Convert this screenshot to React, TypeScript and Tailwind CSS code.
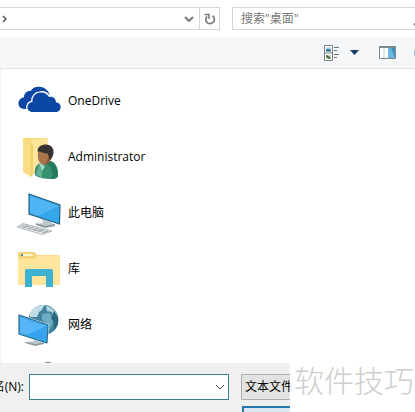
import type { ReactNode } from "react";

function OneDriveIcon() {
  return (
    <svg viewBox="0 0 44 44" className="size-11 shrink-0" aria-hidden="true">
      <path
        d="M6 30C2 29.500 0 27 0.500 23.500C1 20.500 3 18.500 6 18.500C6 14 9 11.500 12.500 12C15 8 19 7 23 8C27 8.500 30 11.500 31.500 15L28 30Z"
        fill="#0d47a5"
      />
      <path
        d="M15 33C11 33 9 30.500 9.500 27.500C10 24.500 12 23 14.500 23C14 18 17 14 22 13.500C26 13 29.500 15 31 18C35 17 38 19.500 38 23.500C41.500 23.500 43 26 42.500 29C42 31.500 40.500 33 38 33Z"
        fill="#0d47a5"
        stroke="#fff"
        strokeWidth="2.600"
        paintOrder="stroke"
      />
    </svg>
  );
}

function UserFolderIcon() {
  return (
    <svg viewBox="0 0 44 44" className="size-11 shrink-0" aria-hidden="true">
      <path d="M5 3H29.500V38H9L5 34Z" fill="#f8d878" />
      <path d="M12 5L29.500 3V37L12 39Z" fill="#ffe59a" />
      <path d="M5 3L13 8V42L5 37Z" fill="#f9dc85" />
      <path d="M13 8V42L15 40V9Z" fill="#f3cf6c" />
      <path
        d="M17 40C16 34 18 30 22 28L32 26C37 27 40 32 40 40C40 43 37 44 33 44C27 44 20 43 17 40Z"
        fill="#37906f"
      />
      <path d="M32 26C37 27 40 32 40 40C40 43 37 44 33 44C36 39 34 33 29 29Z" fill="#277a5c" />
      <path d="M21 28.500L23 27L27 32L24 36Z" fill="#9fd6c2" />
      <path d="M24 36L24 43L18 40L21 30Z" fill="#64b093" />
      <path d="M20 17C19 24 21 29 26 30C31 29 34 25 34 16L27 12Z" fill="#a8754e" />
      <path d="M26 30C31 29 34 25 34 16L30 17C31 22 29 27 26 30Z" fill="#8c5a38" />
      <path
        d="M19.500 16.500C19.500 12 23 9.500 28 9.500C32.500 9.500 36 13 35.500 17.500C35 21 34 24 31.500 25C31.500 22 30.500 20 29.500 18.500C26 18.500 23 16.500 19.500 16.500Z"
        fill="#37322f"
      />
    </svg>
  );
}

function ComputerIcon() {
  return (
    <svg viewBox="0 0 44 44" className="size-11 shrink-0 overflow-visible" aria-hidden="true">
      <path d="M24 28L33 31L37 35L26 36L18 33L25 32Z" fill="#bdc7cd" />
      <path d="M18 32L27 35L37 33V35L27 37L18 34Z" fill="#8c999f" />
      <path d="M11 3L42 14L41.500 33L11 23Z" fill="#35a5ec" stroke="#25627f" strokeWidth="1.200" />
      <path d="M12 5L41 15L20 25L12 22Z" fill="#62c0fa" opacity="0.600" />
      <path d="M-1 36L5 32.500L34 40L24 43.500Z" fill="#e5e9eb" stroke="#a5adb1" strokeWidth="0.800" />
      <path
        d="M2 35L28 42M4 34L31 41M5 37.500L10 34M10 38.500L15 35.500M15 40L20 37M20 41L25 38M25 42.500L30 39.500"
        stroke="#9aa4aa"
        strokeWidth="0.800"
      />
    </svg>
  );
}

function LibraryIcon() {
  return (
    <svg viewBox="0 0 44 44" className="size-11 shrink-0" aria-hidden="true">
      <path d="M0 7Q0 5 2 5H16L20 8H40Q42 8 42 10V36Q42 38 40 38H2Q0 38 0 36Z" fill="#fbdc83" />
      <path d="M0 12H16L20 9H42V36Q42 38 40 38H2Q0 38 0 36Z" fill="#ffe59c" />
      <rect x="2" y="6" width="14" height="4" rx="1" fill="#fff3c2" stroke="#e3bc4e" />
      <rect x="3" y="7" width="2" height="2" fill="#48908b" />
      <path d="M7 40V24Q7 22 9 22H33Q35 22 35 24V40H28V29H14V40Z" fill="#3cb1d2" />
    </svg>
  );
}

function NetworkIcon() {
  return (
    <svg viewBox="0 0 44 44" className="size-11 shrink-0" aria-hidden="true">
      <circle cx="25.500" cy="17" r="15" fill="#43839f" />
      <path d="M12 10C15 4 21 2 27 2C24 5 25 7 21 9L19 14L12 14Z" fill="#c1dee6" />
      <path d="M28 3C34 4 38 9 40 14L35 13L34 9L29 8Z" fill="#b4d7e2" />
      <path d="M24 11L31 10L36 15L34 22L31 28L28 20L24 17Z" fill="#6dacc4" />
      <path d="M36 8L40 14L40 21L36 28L36 20L33 15Z" fill="#2b677f" />
      <path d="M16 34L23 36L26 40L18 42L7 39L16 38Z" fill="#bdc8cf" />
      <path d="M7 39L18 41L26 39V41L17 43L7 40Z" fill="#909ba1" />
      <path d="M1 12L30 22L29 40L1 31Z" fill="#36a3ee" stroke="#d5e3e9" strokeWidth="2" />
      <path d="M1 12L30 22L29 40L1 31Z" fill="#36a3ee" stroke="#286888" strokeWidth="1" />
      <path d="M2 14L28 23L9 32L2 30Z" fill="#6ac2fb" opacity="0.600" />
    </svg>
  );
}

function DiskIcon() {
  return (
    <svg viewBox="0 0 44 44" className="size-11 shrink-0" aria-hidden="true">
      <ellipse cx="30" cy="9" rx="6" ry="6" fill="#d9dcdd" stroke="#8a8a8a" />
    </svg>
  );
}

function Chevron({ bold = false }: { bold?: boolean }) {
  return (
    <svg viewBox="0 0 10 6" className="h-[6px] w-[10px]" fill="none" aria-hidden="true">
      <path d="M1 1L5 5L9 1" stroke={bold ? "#7a7a7a" : "#444"} strokeWidth={bold ? 2 : 1} />
    </svg>
  );
}

const PLACES: { name: string; icon: ReactNode }[] = [
  { name: "OneDrive", icon: <OneDriveIcon /> },
  { name: "Administrator", icon: <UserFolderIcon /> },
  { name: "此电脑", icon: <ComputerIcon /> },
  { name: "库", icon: <LibraryIcon /> },
  { name: "网络", icon: <NetworkIcon /> },
  { name: "", icon: <DiskIcon /> },
];

function AddressRow() {
  return (
    <div className="flex gap-3 overflow-hidden bg-white pt-[7px] pb-[7px]">
      <div className="flex h-[23px] w-[220px] shrink-0 border-y border-r border-[#d5d5d5]">
        <button aria-label="展开路径" className="flex flex-1 items-center pl-[2px]">
          <svg viewBox="0 0 5 8" className="h-2 w-[5px]" fill="none" aria-hidden="true">
            <path d="M1 1L4 4L1 7" stroke="#555" strokeWidth="1.500" />
          </svg>
        </button>
        <button aria-label="以前的位置" className="flex w-5 items-center justify-center">
          <Chevron bold />
        </button>
        <button aria-label="刷新" className="flex w-5 items-center justify-center border-l border-[#d5d5d5]">
          <svg viewBox="0 0 12 12" className="size-3" fill="none" aria-hidden="true">
            <path d="M8.500 2.800A4.300 4.300 0 1 1 3 3.300" stroke="#7a7a7a" strokeWidth="1.700" />
            <path d="M0.500 1.500H5V6" stroke="#7a7a7a" strokeWidth="1.500" />
          </svg>
        </button>
      </div>
      <div className="-mr-3 flex h-[23px] min-w-0 flex-1 items-center border border-r-0 border-[#d5d5d5]">
        <input
          type="search"
          aria-label="搜索"
          placeholder={'搜索"桌面"'}
          className="min-w-0 flex-1 bg-transparent pl-2 outline-none placeholder:text-[#767676]"
        />
        <svg viewBox="0 0 14 14" className="size-[14px] shrink-0" fill="none" aria-hidden="true">
          <circle cx="9" cy="5" r="4" stroke="#777" strokeWidth="1.500" />
          <path d="M6 8L1 13" stroke="#777" strokeWidth="2" />
        </svg>
      </div>
    </div>
  );
}

function Toolbar() {
  return (
    <div className="flex h-8 items-center justify-end overflow-hidden border-b border-[#dde2e5] bg-[#f4f6f8]">
      <button aria-label="更改视图" className="mr-[10px]">
        <svg viewBox="0 0 16 16" className="size-4" fill="none" aria-hidden="true">
          <path d="M0.500 0.500H8.500V15.500H0.500ZM0.500 8H8.500" fill="#fff" stroke="#758086" />
          <path d="M2 2.500H7V6H2Z" fill="#a1d2df" />
          <path d="M2 5L4 4L7 5V6.500H2Z" fill="#246c91" />
          <path d="M2 10H7V14H2Z" fill="#cfe0b9" />
          <path d="M2 10L5 11L7 14H5L2 12Z" fill="#4d704f" />
          <path d="M10 2.500H15M10 5.500H13M10 9.500H15M10 12.500H13" stroke="#69747c" />
        </svg>
      </button>
      <button aria-label="更多选项" className="mr-[20px]">
        <svg viewBox="0 0 9 5" className="h-[5px] w-[9px]" aria-hidden="true">
          <path d="M0 0H9L4.500 5Z" fill="#183a60" />
        </svg>
      </button>
      <button aria-label="显示预览窗格" className="mr-[18px]">
        <svg viewBox="0 0 17 13" className="h-[13px] w-[17px]" fill="none" aria-hidden="true">
          <path d="M0.500 0.500H16.500V12.500H0.500Z" fill="#fff" stroke="#788891" />
          <path d="M0 1H17" stroke="#788891" strokeWidth="2" />
          <path d="M5 2V12" stroke="#c2cbd0" />
          <path d="M9 2H16V12H9Z" fill="#6bb8dc" />
          <path d="M12 2H16V12Z" fill="#3e93c0" />
        </svg>
      </button>
      <button aria-label="获取帮助" className="-mr-[13px]">
        <svg viewBox="0 0 14 14" className="size-[14px]" aria-hidden="true">
          <circle cx="7" cy="7" r="7" fill="#5fd0e6" />
        </svg>
      </button>
    </div>
  );
}

function PlaceList() {
  return (
    <ul className="h-[294px] overflow-hidden border-l border-[#f0f4f7] pt-1 pl-[17px]">
      {PLACES.map((place, i) => (
        <li key={i} className="flex h-14 items-center gap-[6px]">
          {place.icon}
          <span>{place.name}</span>
        </li>
      ))}
    </ul>
  );
}

function Footer() {
  return (
    <div className="flex">
      <div className="h-[49px] min-w-0 flex-1 overflow-hidden bg-[#f0f0f0] pt-[11px]">
        <div className="flex h-[26px] items-center">
          <label htmlFor="filename" className="flex w-[29px] shrink-0 justify-end pr-[5px] whitespace-nowrap">
            文件名(N):
          </label>
          <div className="flex h-[26px] w-[200px] shrink-0 items-center border border-[#3c7f92] bg-white">
            <input id="filename" type="text" className="h-full min-w-0 flex-1 px-1 outline-none" />
            <button aria-label="历史文件名" className="flex h-full w-4 items-center justify-center">
              <Chevron />
            </button>
          </div>
          <select
            aria-label="文件类型"
            className="ml-3 h-[26px] w-[160px] shrink-0 appearance-none border border-[#adadad] bg-[#e3e3e3] pl-[3px]"
          >
            <option>文本文件(*.txt)</option>
          </select>
        </div>
        <button
          aria-label="打开"
          className="mt-[6px] ml-[242px] h-6 w-[84px] border-2 border-[#2678ab] bg-[#dce9f2]"
        />
      </div>
      <div className="w-[125px] shrink-0 bg-white pl-[4px] text-[30px] leading-9 font-light whitespace-nowrap text-[#cecece]">
        软件技巧
      </div>
    </div>
  );
}

export default function App() {
  return (
    <main className="w-full overflow-hidden bg-white font-['Open_Sans','Noto_Sans_CJK_SC',sans-serif] text-xs text-black">
      <AddressRow />
      <Toolbar />
      <PlaceList />
      <Footer />
    </main>
  );
}
